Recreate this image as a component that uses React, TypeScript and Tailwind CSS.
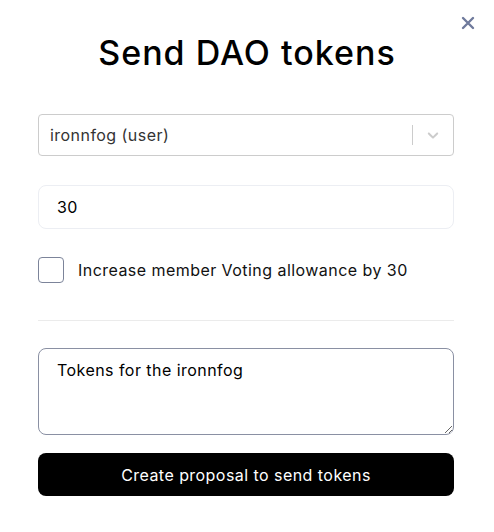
import React, { useState, useEffect, useRef } from 'react';

const font = { fontFamily: 'Inter, "Noto Sans", sans-serif' };

export default function App() {
    const [amount, setAmount] = useState('30');
    const [checked, setChecked] = useState(false);
    const [note, setNote] = useState('Tokens for the ironnfog');
    const noteRef = useRef<HTMLTextAreaElement>(null);

    // caret sits at the end of the note, as in the form
    useEffect(() => {
        const el = noteRef.current;
        if (el) {
            el.focus();
            el.setSelectionRange(el.value.length, el.value.length);
        }
    }, []);

    return (
        <div className="w-[494px] h-[532px] bg-white text-black" style={font}>
            <div className="flex justify-end pt-[16px] pr-[19px]">
                <button className="w-[14px] h-[14px] text-[#6f7a9c]" aria-label="Close">
                    <svg viewBox="0 0 14 14" className="w-[14px] h-[14px]" fill="none" stroke="currentColor" strokeWidth="2.4" strokeLinecap="round">
                        <path d="M2 2 L12 12 M12 2 L2 12" />
                    </svg>
                </button>
            </div>

            <h1 className="text-center text-[34px] font-medium leading-[40px] mt-[3px] tracking-[1px]">Send DAO tokens</h1>

            <div className="ml-[38px] w-[416px] pt-[41px] tracking-[0.45px]">
                {/* member select */}
                <div className="h-[42px] flex items-center border border-[#cccccc] rounded-[4px]">
                    <span className="flex-1 pl-[11px] text-[16px] text-[#333333]">ironnfog (user)</span>
                    <span className="w-px h-[20px] bg-[#cccccc]" />
                    <span className="px-[11px] text-[#cccccc]">
                        <svg viewBox="0 0 20 20" className="w-[18px] h-[18px]" fill="currentColor">
                            <path d="M4.516 7.548c0.436-0.446 1.043-0.481 1.576 0l3.908 3.747 3.908-3.747c0.533-0.481 1.141-0.446 1.574 0 0.436 0.445 0.408 1.197 0 1.615-0.406 0.418-4.695 4.502-4.695 4.502-0.217 0.223-0.502 0.335-0.787 0.335s-0.57-0.112-0.789-0.335c0 0-4.287-4.084-4.695-4.502s-0.436-1.17 0-1.615z" />
                        </svg>
                    </span>
                </div>

                {/* amount */}
                <input
                    value={amount}
                    onChange={(e) => setAmount(e.target.value)}
                    className="mt-[29px] w-full h-[44px] border border-[#eceef3] rounded-[8px] px-[18px] text-[16px] outline-none"
                />

                <label className="mt-[28px] flex items-center gap-[14px] cursor-pointer">
                    <input type="checkbox" checked={checked} onChange={() => setChecked(!checked)} className="hidden" />
                    <span className="w-[26px] h-[26px] rounded-[4px] border border-[#7c849a] bg-white" />
                    <span className="text-[16px] text-[#111111]">Increase member Voting allowance by 30</span>
                </label>

                <div className="mt-[37px] h-px bg-[#ebebeb]" />

                <textarea
                    ref={noteRef}
                    value={note}
                    onChange={(e) => setNote(e.target.value)}
                    className="mt-[27px] block w-full h-[87px] border border-[#8a90a3] rounded-[8px] px-[18px] py-[9px] text-[16px] leading-[24px] outline-none resize-y caret-black"
                />

                <button className="mt-[18px] w-full h-[43px] bg-black text-white rounded-[8px] text-[16px]">
                    Create proposal to send tokens
                </button>
            </div>
        </div>
    );
}
